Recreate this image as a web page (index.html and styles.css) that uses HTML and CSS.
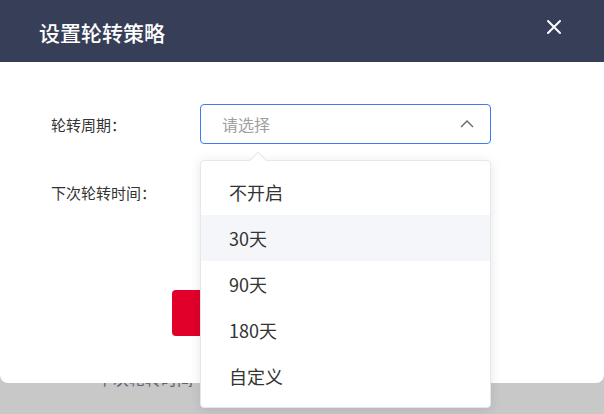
FILE: index.html
```html
<!DOCTYPE html>
<html lang="zh-CN">
<head>
  <meta charset="UTF-8" />
  <meta name="viewport" content="width=device-width, initial-scale=1.0" />
  <title>设置轮转策略</title>
  <link rel="stylesheet" href="styles.css">
</head>
<body>
  <!-- page behind the mask -->
  <div class="page">
    <div class="page-label">下次轮转时间</div>
  </div>

  <div class="dialog">
    <div class="dialog-header">
      <span class="dialog-title">设置轮转策略</span>
      <button class="close-btn" aria-label="关闭">
        <svg width="16" height="16" viewBox="0 0 16 16">
          <path d="M2 2 L14 14 M14 2 L2 14" stroke="#fff" stroke-width="2" fill="none" stroke-linecap="round"/>
        </svg>
      </button>
    </div>

    <div class="dialog-body">
      <div class="form-item">
        <label class="form-label">轮转周期：</label>
        <div class="select">
          <div class="select-input">
            <span class="placeholder">请选择</span>
            <svg class="chevron" width="14" height="8" viewBox="0 0 14 8">
              <path d="M1 7 L7 1 L13 7" stroke="#666" stroke-width="1.4" fill="none"/>
            </svg>
          </div>
          <div class="dropdown">
            <div class="dropdown-arrow"></div>
            <div class="option">不开启</div>
            <div class="option hover">30天</div>
            <div class="option">90天</div>
            <div class="option">180天</div>
            <div class="option">自定义</div>
          </div>
        </div>
      </div>
      <div class="form-item">
        <label class="form-label">下次轮转时间：</label>
      </div>
    </div>

    <div class="dialog-footer">
      <button class="btn-primary" aria-label="确定"></button>
    </div>
  </div>
</body>
</html>
```

FILE: styles.css
```css
body {
  margin: 0;
  padding: 0;
  width: 604px;
  height: 414px;
  overflow: hidden;
  background-color: #c8c8c8;
  font-family: "Noto Sans CJK SC", "Noto Sans", sans-serif;
  color: #333;
}

.page {
  position: absolute;
  top: 0;
  left: 0;
  right: 0;
  bottom: 0;
}

.page-label {
  position: absolute;
  top: 366px;
  left: 97px;
  font-size: 16px;
  color: #5a6275;
}

.dialog {
  position: absolute;
  top: 0;
  left: 0;
  width: 604px;
  background: #fff;
  border-radius: 0 0 8px 8px;
}

.dialog-header {
  height: 62px;
  background: #373f58;
  display: flex;
  align-items: center;
  justify-content: space-between;
  padding: 0 42px 0 39px;
}

.dialog-title {
  color: #fff;
  font-size: 21px;
  font-weight: 500;
  margin-top: 2px;
}

.close-btn {
  background: none;
  border: none;
  padding: 0;
  margin-bottom: 8px;
  display: flex;
  cursor: pointer;
}

.dialog-body {
  padding: 42px 51px 0;
}

.form-item {
  display: flex;
  align-items: center;
  height: 40px;
  margin-bottom: 28px;
}

.form-item:last-child {
  margin-bottom: 0;
}

.form-label {
  width: 149px;
  font-size: 15px;
  color: #333;
}

.select {
  position: relative;
  width: 291px;
}

.select-input {
  height: 40px;
  box-sizing: border-box;
  border: 1px solid #3b7cf0;
  border-radius: 4px;
  display: flex;
  align-items: center;
  justify-content: space-between;
  padding: 0 16px 0 21px;
}

.placeholder {
  font-size: 16px;
  color: #a0a0a0;
}

.chevron {
  margin-top: -1px;
}

.dropdown {
  position: absolute;
  top: 56px;
  left: 0;
  width: 291px;
  box-sizing: border-box;
  background: #fff;
  border: 1px solid #e4e7ed;
  border-radius: 4px;
  box-shadow: 0 2px 12px rgba(0, 0, 0, 0.1);
  padding: 8px 0;
  z-index: 10;
}

.dropdown-arrow {
  position: absolute;
  top: -7px;
  left: 51px;
  width: 11px;
  height: 11px;
  background: #fff;
  border-top: 1px solid #e4e7ed;
  border-left: 1px solid #e4e7ed;
  transform: rotate(45deg);
}

.option {
  height: 46px;
  line-height: 46px;
  padding-left: 28px;
  font-size: 18px;
  color: #333;
}

.option.hover {
  background: #f5f6fa;
}

.dialog-footer {
  padding: 78px 0 47px 172px;
  display: flex;
}

.btn-primary {
  width: 120px;
  height: 46px;
  border: none;
  border-radius: 4px;
  background: #e1002a;
  color: #fff;
  font-size: 16px;
  font-family: inherit;
}
```
